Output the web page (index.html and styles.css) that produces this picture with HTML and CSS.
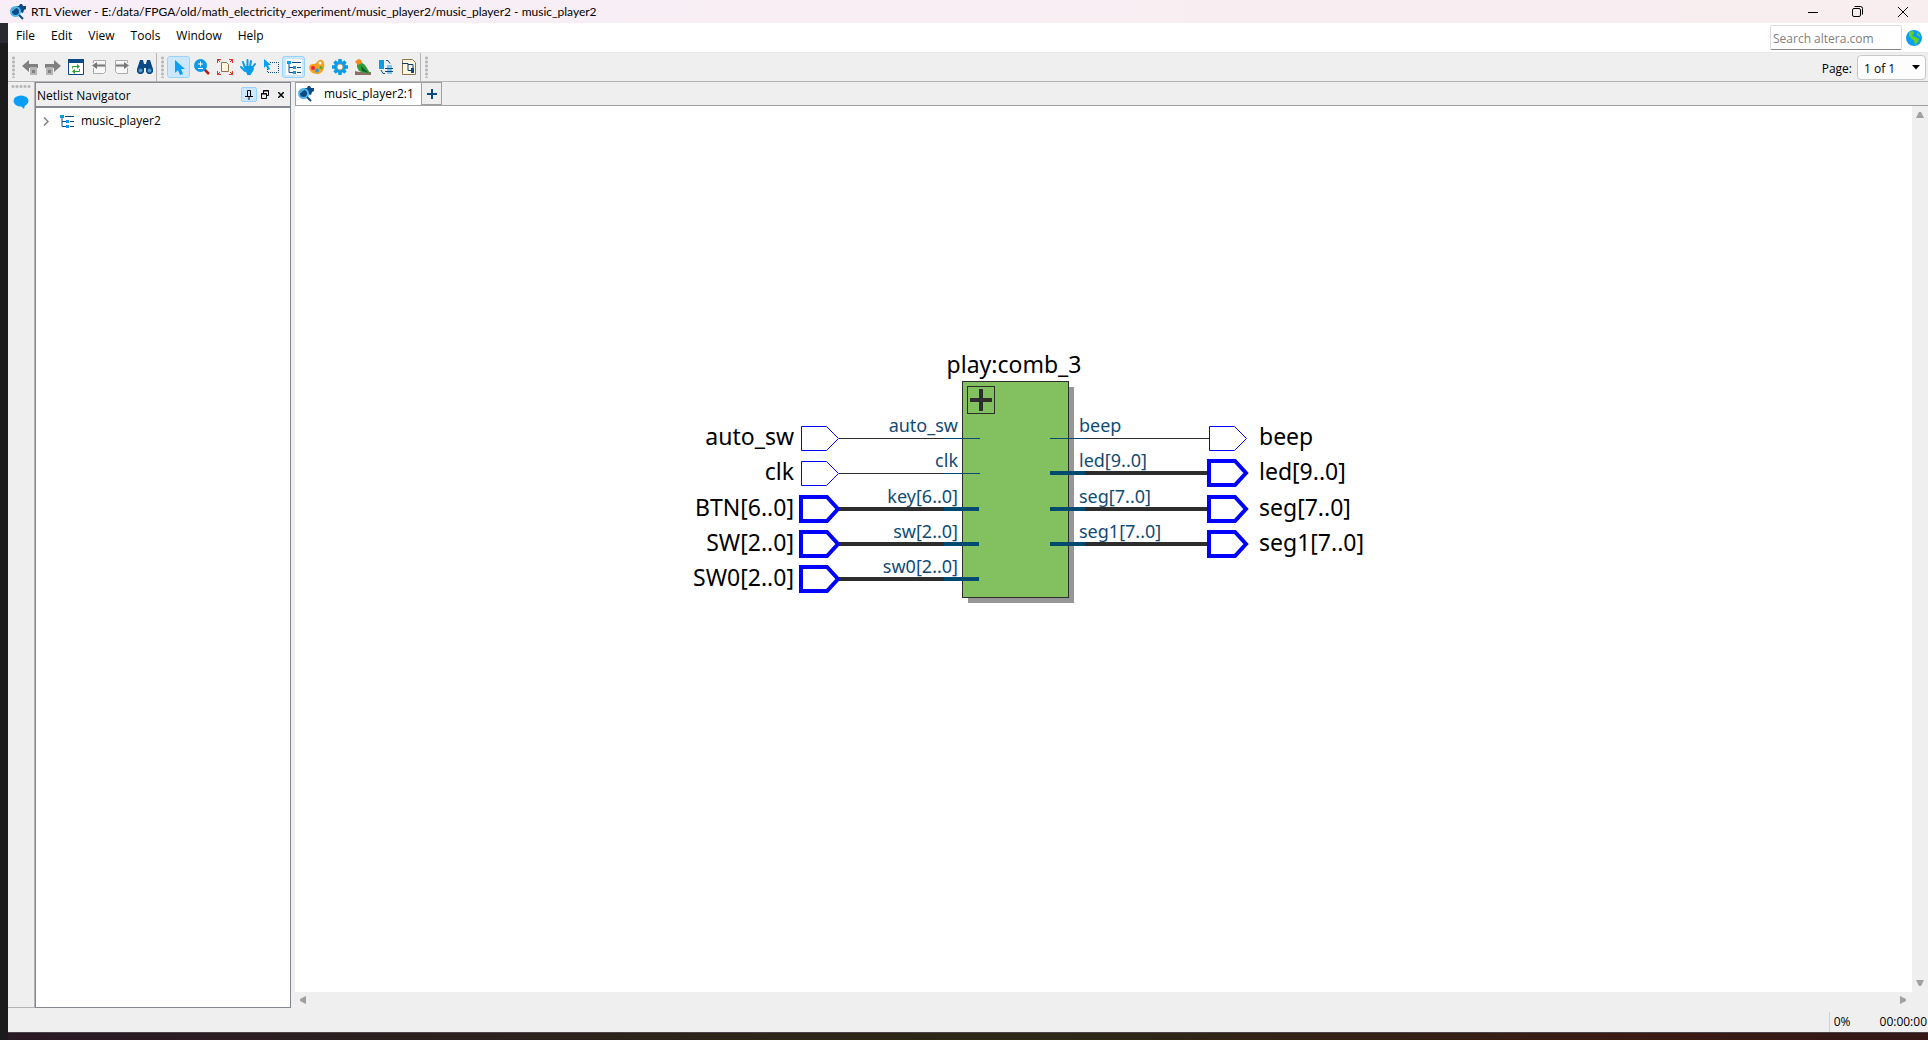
FILE: index.html
```html
<!DOCTYPE html>
<html lang="en">
<head>
<meta charset="utf-8">
<title>RTL Viewer</title>
<link rel="stylesheet" href="styles.css">
</head>
<body>
<svg class="defs" aria-hidden="true">
  <symbol id="i-app" viewBox="0 0 16 16">
    <path d="M6 2h3l1-2h2l1 2h3v3l-2 1-1 3-3-1z" fill="#0b4a86"/>
    <circle cx="5.500" cy="7.500" r="4.500" fill="#0b4a86" stroke="#4fb9ee" stroke-width="2"/>
    <path d="M2.500 7a3 3 0 0 1 3-2.500" fill="none" stroke="#8bd3f5"/>
    <path d="M9 11l4 4" stroke="#0b4a86" stroke-width="2"/>
  </symbol>
  <symbol id="i-tree" viewBox="0 0 16 16">
    <path d="M3 5v8.500h5M3 8.500h5M6 3.500h9M11 8.500h4M11 13.500h4" fill="none" stroke="#0b4a86"/>
    <path d="M1 2h4v3H1zM7 7h3v3H7zM7 12h3v3H7z" fill="#0a9be0"/>
  </symbol>
</svg>
<header class="titlebar">
  <svg class="app-icon"><use href="#i-app"/></svg>
  <h1 class="title">RTL Viewer - E:/data/FPGA/old/math_electricity_experiment/music_player2/music_player2 - music_player2</h1>
  <button class="win-btn" aria-label="Minimize"><svg width="10" height="10"><path d="M0 5.500h10" stroke="#000"/></svg></button>
  <button class="win-btn" aria-label="Restore"><svg width="11" height="11" fill="none" stroke="#000"><rect x=".5" y="2.500" width="8" height="8" rx="1.500"/><path d="M2.500.5H8.500a2 2 0 0 1 2 2V8.500"/></svg></button>
  <button class="win-btn" aria-label="Close"><svg width="10" height="10"><path d="M0 0l10 10M10 0L0 10" stroke="#000"/></svg></button>
</header>
<div class="desktop">
<div class="app">
  <div class="menubar">
    <nav class="menus">
      <button class="menu">File</button><button class="menu">Edit</button><button class="menu">View</button><button class="menu">Tools</button><button class="menu">Window</button><button class="menu">Help</button>
    </nav>
    <div class="search">
      <input class="search-box" type="text" placeholder="Search altera.com" aria-label="Search altera.com">
      <svg width="16" height="16"><circle cx="8" cy="8" r="8" fill="#0a9ff5"/><path d="M3 2l4-1 1 2-2 3 3 1 4 2-1 3-3 3-1-4-2-2-3-3z" fill="#62d321"/><path d="M11 2l3 3v2l-3-2z" fill="#62d321"/></svg>
    </div>
  </div>
  <div class="toolbar">
    <div class="tool-group">
      <span class="grip"></span>
      <button class="tool" aria-label="Back"><svg width="16" height="16"><path d="M0 7l7-6v4h9v4H7v4z" fill="#808080"/><path d="M8 8h7v8H8z" fill="#b5b5b5"/><path d="M10 11h3v3h-3z" fill="#808080"/></svg></button>
      <button class="tool" aria-label="Forward"><svg width="16" height="16"><path d="M16 7L9 1v4H0v4h9v4z" fill="#808080"/><path d="M1 8h7v8H1z" fill="#b5b5b5"/><path d="M3 11h3v3H3z" fill="#808080"/></svg></button>
      <button class="tool" aria-label="Refresh"><svg width="16" height="16"><path d="M.5.5h15v15H.5z" fill="#fff" stroke="#0b4a86"/><path d="M0 0h16v4H0z" fill="#0b4a86"/><path d="M4.500 9.500v-2H9M11.500 10v2.500H7" fill="none" stroke="#35a035"/><path d="M9 5l3 2.500L9 10zM7 10l-3 2.500L7 15z" fill="#35a035"/></svg></button>
      <button class="tool" aria-label="Previous page"><svg width="16" height="16"><path d="M2.500 14.500v-13h12v11l-2 2z" fill="#f8f8f8" stroke="#aaa"/><path d="M1 4h13v5H1z" fill="#efefef"/><path d="M1 6.500l5-3.500v2.500h8v2H6V10z" fill="#777"/></svg></button>
      <button class="tool" aria-label="Next page"><svg width="16" height="16"><path d="M1.500 12.500v-11h12v13h-10z" fill="#f8f8f8" stroke="#aaa"/><path d="M2 4h13v5H2z" fill="#efefef"/><path d="M15 6.500L10 3v2.500H2v2h8V10z" fill="#777"/></svg></button>
      <button class="tool" aria-label="Find"><svg width="16" height="16"><path d="M3 1h3l1 4h2l1-4h3l3 9v3l-2 2h-3l-2-2V9H7v4l-2 2H2l-2-2v-3z" fill="#0b4a86"/><circle cx="3.500" cy="11.500" r="2" fill="#4d9ccc"/><circle cx="12.500" cy="11.500" r="2" fill="#4d9ccc"/></svg></button>
    </div>
    <div class="tool-group">
      <span class="grip"></span>
      <button class="tool on" aria-label="Select"><svg width="16" height="16"><path d="M4 1v13l3-3 2 5 3-1-2-5h4z" fill="#0a9ff5"/></svg></button>
      <button class="tool" aria-label="Zoom"><svg width="16" height="16"><path d="M10 10l5 5" stroke="#b32020" stroke-width="2.500"/><circle cx="6.500" cy="6.500" r="6.500" fill="#0a9be8"/><path d="M6.500 2.500v5M4 5h5M4 9.500h5" stroke="#fff"/></svg></button>
      <button class="tool" aria-label="Fit"><svg width="16" height="16"><path d="M4.500 3.500h5l2 2v7h-7z" fill="#fff8df" stroke="#8f7350"/><path d="M.5 4V.5H4M12 .5h3.500V4M.5 12v3.500H4M15.500 12v3.500H12M0 0l3 3M16 0l-3 3M0 16l3-3M16 16l-3-3" fill="none" stroke="#e63328"/></svg></button>
      <button class="tool" aria-label="Pan"><svg width="16" height="16" fill="none" stroke="#0a9be8" stroke-width="2" stroke-linecap="round"><path d="M5 9L3 3M7.500 8V1M10 8l1-6M12 9l3-4M5 12L1 8"/><path d="M5 8h7l1 2-3 5H8z" fill="#0a9be8"/></svg></button>
      <button class="tool" aria-label="Area select"><svg width="16" height="16"><path d="M7 3.500h8.500v10h-11V9" fill="none" stroke="#0b4a86" stroke-dasharray="1 1"/><path d="M1 0v9l2-2 2 4 2-1-2-4h3z" fill="#0a9ff5"/></svg></button>
      <button class="tool on" aria-label="Netlist Navigator"><svg class="white" width="16" height="16"><use href="#i-tree"/></svg></button>
      <button class="tool" aria-label="Colors"><svg width="16" height="16"><path d="M1 6C4 4 5 6 7 4s4-5 7-2 1 13-6 13S-1 9 1 6z" fill="#f9a11b"/><circle cx="11" cy="4" r="1.500" fill="#fff"/><circle cx="4" cy="9" r="2" fill="#e3234c"/><circle cx="8" cy="11.500" r="2" fill="#2a9fe0"/><circle cx="12" cy="8.500" r="1.500" fill="#49ad3a"/></svg></button>
      <button class="tool" aria-label="Settings"><svg width="16" height="16"><path d="M8 0v16M0 8h16M2.500 2.500l11 11M13.500 2.500l-11 11" stroke="#0a9be8" stroke-width="3.500"/><circle cx="8" cy="8" r="4.500" fill="#fff" stroke="#0a9be8" stroke-width="3"/><circle cx="8" cy="8" r="3" fill="none" stroke="#b5a070"/></svg></button>
      <button class="tool" aria-label="Bird's eye view"><svg width="16" height="16"><path d="M0 12l4 1h12v3H0z" fill="#8d6e63"/><path d="M2 4l4-1 4 3 5 8H9l-5-2-2-4z" fill="#2f9f3a"/><path d="M6 7l8 7-7-2z" fill="#145c28"/><path d="M0 3l2-2 2-1 2 1 1 3-4 2z" fill="#f58a1f"/></svg></button>
      <button class="tool" aria-label="Swap"><svg width="16" height="16"><path d="M1 1h5v9H1z" fill="#0a9be8"/><path d="M9 6h5v9H9z" fill="#7cc8f2"/><path d="M8 1.500h2l2 3M3 11l2 3.500h2M7 9.500h8M7 12.500h8" fill="none" stroke="#0b4a86"/></svg></button>
      <button class="tool" aria-label="Export schematic"><svg width="16" height="16"><path d="M1.500.5h10l3 3v12h-13z" fill="#fff8df" stroke="#8f7350"/><path d="M1 4.500h6v7h3M7 5.500h5V10" fill="none" stroke="#0b3c66"/><path d="M10 9h3v5h-3z" fill="#0b4a86"/></svg></button>
    </div>
    <div class="tool-group last">
      <span class="grip"></span>
      <label class="page-label" for="page">Page:</label>
      <div class="select-wrap"><select id="page" class="page"><option>1 of 1</option></select><svg class="caret" width="8" height="5"><path d="M0 0h8L4 4.500z"/></svg></div>
    </div>
  </div>
  <main class="work">
    <aside class="rail"><span class="grip-h"></span><button class="tool" aria-label="Messages"><svg width="16" height="16"><ellipse cx="8" cy="7" rx="7.500" ry="5.500" fill="#0a9ff5"/><path d="M7 11h5l-1 4z" fill="#0a9ff5"/></svg></button></aside>
    <section class="dock">
      <div class="dock-head">
        <h2 class="dock-title">Netlist Navigator</h2>
        <button class="dock-btn on" aria-label="Pin"><svg width="8" height="10"><path d="M2.500 6V.5h3V6M0 6.500h8M4 7v3M5.500 1v5" fill="none" stroke="#000"/></svg></button>
        <button class="dock-btn" aria-label="Float"><svg width="8" height="9" fill="none" stroke="#000"><path d="M2.500 3V.5h5v5H6M2 1h6"/><path d="M.5 3.500h5v5h-5zM0 4h6"/></svg></button>
        <button class="dock-btn" aria-label="Close"><svg width="6" height="6"><path d="M0 0l6 6M6 0L0 6" stroke="#000" stroke-width="1.500"/></svg></button>
      </div>
      <ul class="tree"><li class="node"><svg width="6" height="9"><path d="M1 .5l4 4-4 4" fill="none" stroke="#808080" stroke-width="1.500"/></svg><svg class="node-icon" width="16" height="16"><use href="#i-tree"/></svg>music_player2</li></ul>
    </section>
    <section class="doc">
      <div class="tabs">
        <button class="tab"><svg width="16" height="16"><use href="#i-app"/></svg>music_player2:1</button>
        <button class="add-tab" aria-label="New tab"><svg width="10" height="10"><path d="M5 0v10M0 5h10" stroke="#0b4a86" stroke-width="2"/></svg></button>
      </div>
      <div class="view">
        <svg class="canvas" viewBox="295 106 1617 886">
          <defs>
            <path id="thin" d="M0-12h25l12 12-12 12H0z" class="port"/>
            <path id="bus" d="M0-12h26l11 12-11 12H0z" class="port bus"/>
          </defs>
          <path class="shadow" d="M968 387h106v216H968z"/>
          <rect class="block" x="962.500" y="381.500" width="106" height="216"/>
          <rect class="box" x="967.500" y="386.500" width="27" height="27"/>
          <path class="plus" d="M970 400h22M981 389v22"/>
          <path class="wire" d="M839 438.500H944M839 473.500H944M1085 438.500H1209"/>
          <path class="wire bus" d="M838 509H944M838 544H944M838 579H944M1085 473H1208M1085 509H1208M1085 544H1208"/>
          <path class="pin" d="M944 438.500H980M944 473.500H980M1050 438.500H1085"/>
          <path class="pin bus" d="M944 509H979M944 544H979M944 579H979M1050 473H1085M1050 509H1085M1050 544H1085"/>
          <use href="#thin" x="801.500" y="438.500"/><use href="#thin" x="801.500" y="473.500"/>
          <use href="#bus" x="801" y="509"/><use href="#bus" x="801" y="544"/><use href="#bus" x="801" y="579"/>
          <use href="#thin" x="1209.500" y="438.500"/>
          <use href="#bus" x="1209" y="473"/><use href="#bus" x="1209" y="509"/><use href="#bus" x="1209" y="544"/>
          <g class="name mid"><text x="1014" y="373">play:comb_3</text></g>
          <g class="name end"><text x="794" y="445">auto_sw</text><text x="794" y="480">clk</text><text x="794" y="516">BTN[6..0]</text><text x="794" y="551">SW[2..0]</text><text x="794" y="586">SW0[2..0]</text></g>
          <g class="name"><text x="1259" y="445">beep</text><text x="1259" y="480">led[9..0]</text><text x="1259" y="516">seg[7..0]</text><text x="1259" y="551">seg1[7..0]</text></g>
          <g class="pin-name end"><text x="958" y="432">auto_sw</text><text x="958" y="467">clk</text><text x="958" y="503">key[6..0]</text><text x="958" y="538">sw[2..0]</text><text x="958" y="573">sw0[2..0]</text></g>
          <g class="pin-name"><text x="1079" y="432">beep</text><text x="1079" y="467">led[9..0]</text><text x="1079" y="503">seg[7..0]</text><text x="1079" y="538">seg1[7..0]</text></g>
        </svg>
        <div class="vscroll"><svg width="8" height="6"><path d="M0 6h8L5 0H3z"/></svg><svg width="8" height="6"><path d="M0 0h8L5 6H3z"/></svg></div>
        <div class="hscroll"><svg width="6" height="8"><path d="M6 0v8L0 5V3z"/></svg><svg width="6" height="8"><path d="M0 0v8l6-3V3z"/></svg></div>
      </div>
    </section>
  </main>
  <footer class="status"><span class="percent">0%</span><span class="time">00:00:00</span></footer>
</div>
</div>
</body>
</html>
```
FILE: styles.css
```css
* { box-sizing: border-box; }
body {
  margin: 0;
  height: 100vh;
  display: flex;
  flex-direction: column;
  overflow: hidden;
  font: 12px/16px "Open Sans", "Noto Sans", sans-serif;
  color: #000;
  background: linear-gradient(90deg, #2a1926, #2d2517 40%, #2d2817 55%, #3a1a12 85%, #331817);
}
svg { flex: none; display: block; }
.defs { position: absolute; width: 0; height: 0; }
button { margin: 0; padding: 0; border: 0; background: none; font: inherit; color: inherit; }
h1, h2, ul { margin: 0; padding: 0; font: inherit; list-style: none; }

.titlebar { flex: none; height: 23px; display: flex; align-items: center; padding: 0 3px 0 10px; background: linear-gradient(90deg, #f8eef8, #f8eef3 50%, #f8eef0); }
.app-icon { width: 16px; height: 16px; }
.title { flex: 1; padding-left: 5px; font-family: Lato, "Open Sans", sans-serif; white-space: nowrap; }
.win-btn { width: 45px; height: 20px; display: grid; place-items: center; }

.desktop { flex: 1; min-height: 0; display: flex; padding: 0 0 7px 8px; background: linear-gradient(#2a2b30 20px, #1b1b1b 20px) left / 8px 100% no-repeat; }
.app { flex: 1; min-width: 0; display: flex; flex-direction: column; background: #efefef; border-bottom: 1px solid #4b4347; }

.menubar { flex: none; height: 30px; display: flex; justify-content: space-between; background: #fff; border-bottom: 1px solid #e8e8e8; }
.menus { display: flex; gap: 16px; padding: 5px 8px; align-items: flex-start; }
.search { display: flex; align-items: center; gap: 4px; padding-right: 6px; }
.search-box { width: 132px; height: 25px; padding: 4px 2px 2px; border: 1px solid #dcdcdc; border-bottom-color: #868686; border-radius: 2px; font: inherit; }
.search-box::placeholder { color: #808080; opacity: 1; }

.toolbar { flex: none; height: 29px; display: flex; border-bottom: 1px solid #b4b4b4; }
.tool-group { display: flex; align-items: center; border-right: 1px solid #b4b4b4; }
.tool-group.last { flex: 1; border: 0; padding-right: 2px; }
.grip { width: 3px; height: 22px; margin: 0 3px 0 4px; background: radial-gradient(circle, #b8b8b8 1px, transparent 2px) 0 0 / 3px 4px; }
.tool { width: 23px; height: 22px; display: grid; place-items: center; border: 1px solid transparent; border-radius: 3px; }
.on { background: #cce8ff; border: 1px solid #99d1ff; }
.white { background: #fff; }
.page-label { margin-left: auto; padding: 3px 5px 0 0; }
.select-wrap { display: grid; align-items: center; }
.page { grid-area: 1 / 1; appearance: none; width: 69px; height: 25px; padding: 3px 6px 0; border: 1px solid #c8c8c8; border-radius: 4px; background: #fdfdfd; font: inherit; color: inherit; }
.caret { grid-area: 1 / 1; justify-self: end; margin-right: 6px; pointer-events: none; }

.work { flex: 1; min-height: 0; display: flex; }
.rail { width: 27px; display: flex; flex-direction: column; align-items: center; gap: 3px; padding-top: 3px; border-right: 1px solid #b4b4b4; border-bottom: 1px solid #b4b4b4; }
.grip-h { width: 20px; height: 3px; background: radial-gradient(circle, #b8b8b8 1px, transparent 2px) 0 0 / 4px 3px; }
.dock { width: 256px; display: flex; flex-direction: column; border: 1px solid #828790; }
.dock-head { flex: none; height: 25px; display: flex; align-items: center; padding: 0 1px; border-bottom: 2px solid #828790; }
.dock-title { flex: 1; padding-top: 2px; }
.dock-btn { width: 16px; height: 15px; display: grid; place-items: center; border-radius: 2px; }
.tree { flex: 1; background: #fff; padding: 4px 7px; }
.node { display: flex; align-items: center; height: 18px; }
.node-icon { margin: 0 6px 0 10px; }

.doc { flex: 1; min-width: 0; margin-left: 4px; display: flex; flex-direction: column; }
.tabs { flex: none; height: 24px; display: flex; border-bottom: 1px solid #a0a0a0; }
.tab { display: flex; align-items: center; gap: 10px; width: 127px; padding: 0 2px; border: 1px solid #a0a0a0; border-bottom: 0; background: #fff; white-space: nowrap; }
.add-tab { width: 20px; display: grid; place-items: center; border: 1px solid #a0a0a0; border-left: 0; }
.view { flex: 1; min-height: 0; display: grid; grid-template: minmax(0, 1fr) 16px / minmax(0, 1fr) 16px; }
.canvas { width: 100%; height: 100%; background: #fff; }
.vscroll, .hscroll { display: flex; justify-content: space-between; align-items: center; fill: #a0a0a0; }
.vscroll { flex-direction: column; padding: 6px 0; }
.hscroll { padding: 0 6px 0 5px; }

.port { fill: #fff; stroke: #00f; stroke-width: 1; }
.wire { stroke: #2d2d2d; }
.pin { stroke: #004a70; }
.port.bus, .wire.bus, .pin.bus { stroke-width: 4; }
.shadow { fill: #969696; }
.block { fill: #82c060; stroke: #2d2d2d; }
.box { fill: none; stroke: #2d2d2d; }
.plus { stroke: #2d2d2d; stroke-width: 4; }
.name, .pin-name { font-family: "Noto Sans", "Open Sans", sans-serif; }
.name { font-size: 23px; }
.pin-name { font-size: 18px; fill: #0f4c75; }
.end { text-anchor: end; }
.mid { text-anchor: middle; }

.status { flex: none; height: 24px; display: flex; justify-content: flex-end; align-items: center; padding-top: 4px; }
.percent { border-left: 1px solid #d0d0d0; padding: 2px 29px 2px 4px; }
.time { padding-right: 1px; }
```
